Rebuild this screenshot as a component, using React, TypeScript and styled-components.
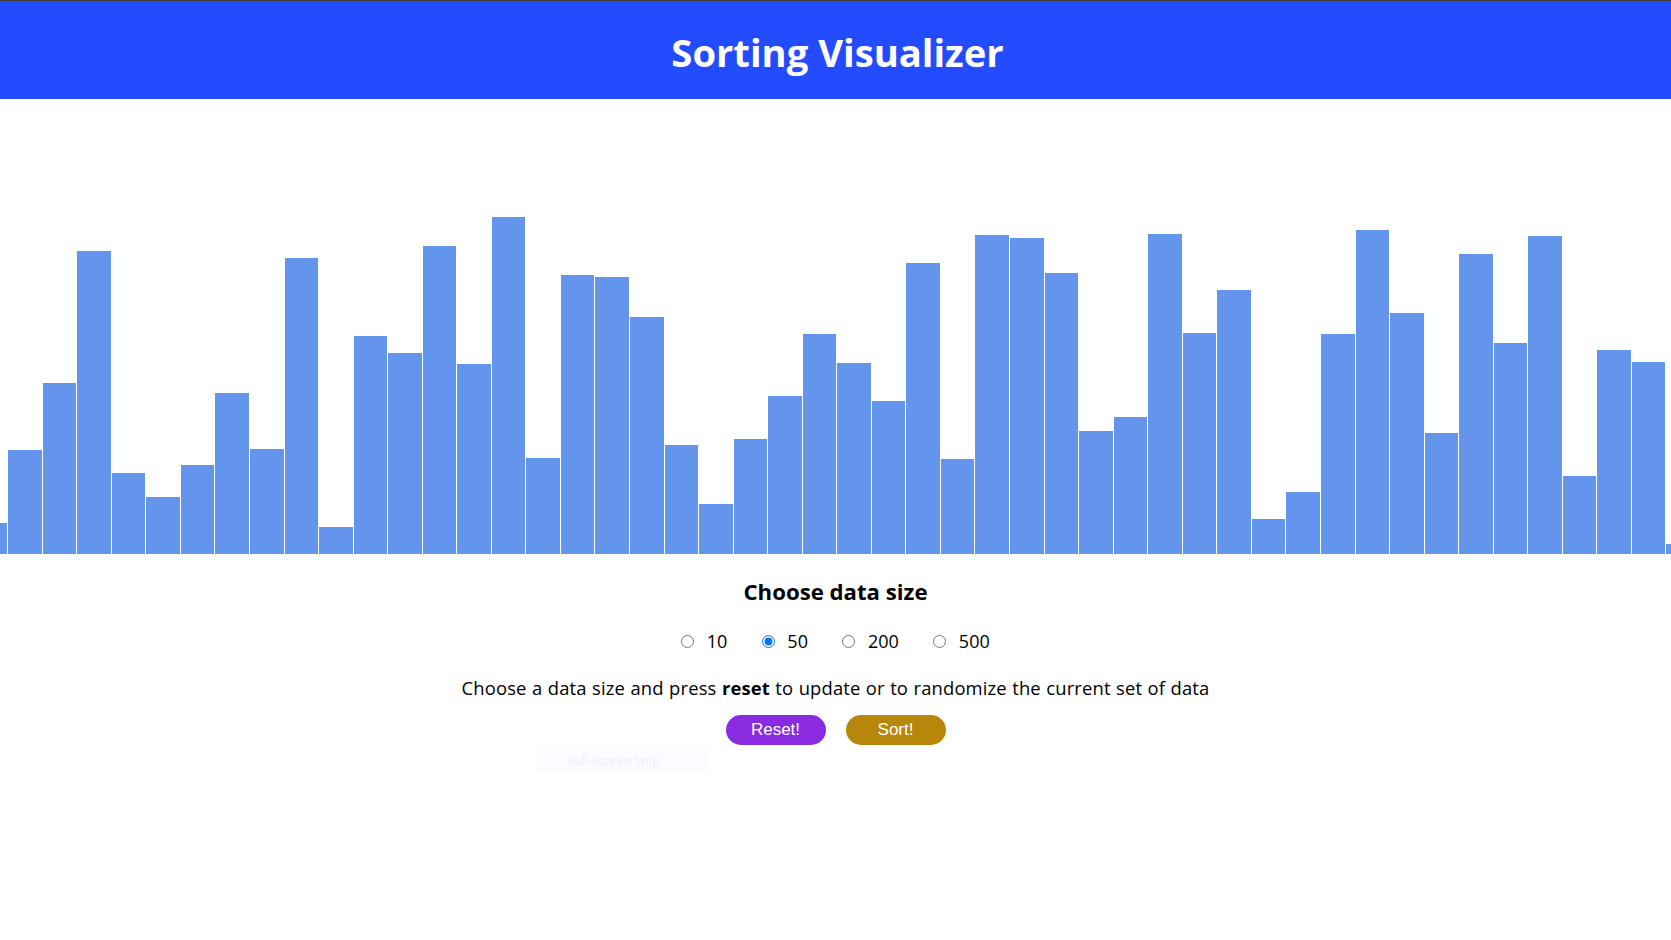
import React from "react";
import styled, { createGlobalStyle } from "styled-components";

const GlobalStyle = createGlobalStyle`
  html, body {
    margin: 0;
    padding: 0;
    background: #ffffff;
    overflow: hidden;
  }
  body {
    font-family: "Open Sans", "Noto Sans", sans-serif;
    color: #000000;
  }
`;

const Page = styled.div`
  position: relative;
  width: 100%;
  min-height: 940px;
`;

const Header = styled.header`
  box-sizing: border-box;
  height: 99px;
  background: #234bff;
  border-top: 1px solid #3a3a3a;
  padding: 4px 0 0 4px;
  display: flex;
  align-items: center;
  justify-content: center;
`;

const Title = styled.h1`
  margin: 0;
  font-size: 38.2px;
  line-height: 53px;
  font-weight: 700;
  color: #ffffff;
`;

const Chart = styled.div`
  box-sizing: border-box;
  height: 455px;
  padding-left: 3.6px;
  display: flex;
  align-items: flex-end;
  justify-content: center;
  overflow: hidden;
`;

const Bar = styled.div`
  flex: 0 0 33.56px;
  margin-right: 1px;
  background: #6495ed;
`;

const Controls = styled.section`
  display: flex;
  flex-direction: column;
  align-items: center;
`;

const SizeHeading = styled.h3`
  margin: 24px 0 0;
  font-size: 22.2px;
  line-height: 28px;
  font-weight: 700;
`;

const RadioRow = styled.div`
  margin-top: 23px;
  display: flex;
  align-items: center;
  gap: 34.5px;
  height: 24px;
`;

const Option = styled.label`
  display: flex;
  align-items: center;
  gap: 12.5px;
  font-size: 18px;
  line-height: 24px;
`;

const Radio = styled.input`
  margin: 0;
  width: 13px;
  height: 13px;
`;

const Hint = styled.p`
  margin: 23px 0 0;
  font-size: 18.4px;
  letter-spacing: 0.15px;
  word-spacing: 0.5px;
  line-height: 24px;
`;

const Buttons = styled.div`
  margin-top: 15px;
  display: flex;
  gap: 20px;
`;

const PillButton = styled.button<{ $bg: string }>`
  width: 100px;
  height: 30px;
  border: none;
  border-radius: 15px;
  background: ${(p) => p.$bg};
  color: #ffffff;
  font-family: "Liberation Sans", Arial, sans-serif;
  font-size: 17px;
  padding: 0;
  cursor: pointer;
`;

const SnipTip = styled.div`
  position: absolute;
  left: 536px;
  top: 750px;
  width: 173px;
  height: 22px;
  box-sizing: border-box;
  padding-left: 32px;
  background: #fbfcff;
  color: #eceff6;
  font-size: 12.5px;
  line-height: 22px;
`;

const heights = [
  31, 104, 171, 303, 81, 57, 89, 161, 105, 296, 27, 218, 201, 308, 190, 337,
  96, 279, 277, 237, 109, 50, 115, 158, 220, 191, 153, 291, 95, 319, 316, 281,
  123, 137, 320, 221, 264, 35, 62, 220, 324, 241, 121, 300, 211, 318, 78, 204,
  192, 10,
];

const sizes = [10, 50, 200, 500];

export default function App() {
  const [size, setSize] = React.useState(50);
  return (
    <Page>
      <GlobalStyle />
      <Header>
        <Title>Sorting Visualizer</Title>
      </Header>
      <Chart>
        {heights.map((h, i) => (
          <Bar key={i} style={{ height: `${h}px` }} />
        ))}
      </Chart>
      <Controls>
        <SizeHeading>Choose data size</SizeHeading>
        <RadioRow>
          {sizes.map((s) => (
            <Option key={s}>
              <Radio
                type="radio"
                name="size"
                checked={size === s}
                onChange={() => setSize(s)}
              />
              {s}
            </Option>
          ))}
        </RadioRow>
        <Hint>
          Choose a data size and press <b>reset</b> to update or to randomize
          the current set of data
        </Hint>
        <Buttons>
          <PillButton $bg="#8a2be2">Reset!</PillButton>
          <PillButton $bg="#b8860b">Sort!</PillButton>
        </Buttons>
      </Controls>
      <SnipTip>Full-screen Snip</SnipTip>
    </Page>
  );
}
